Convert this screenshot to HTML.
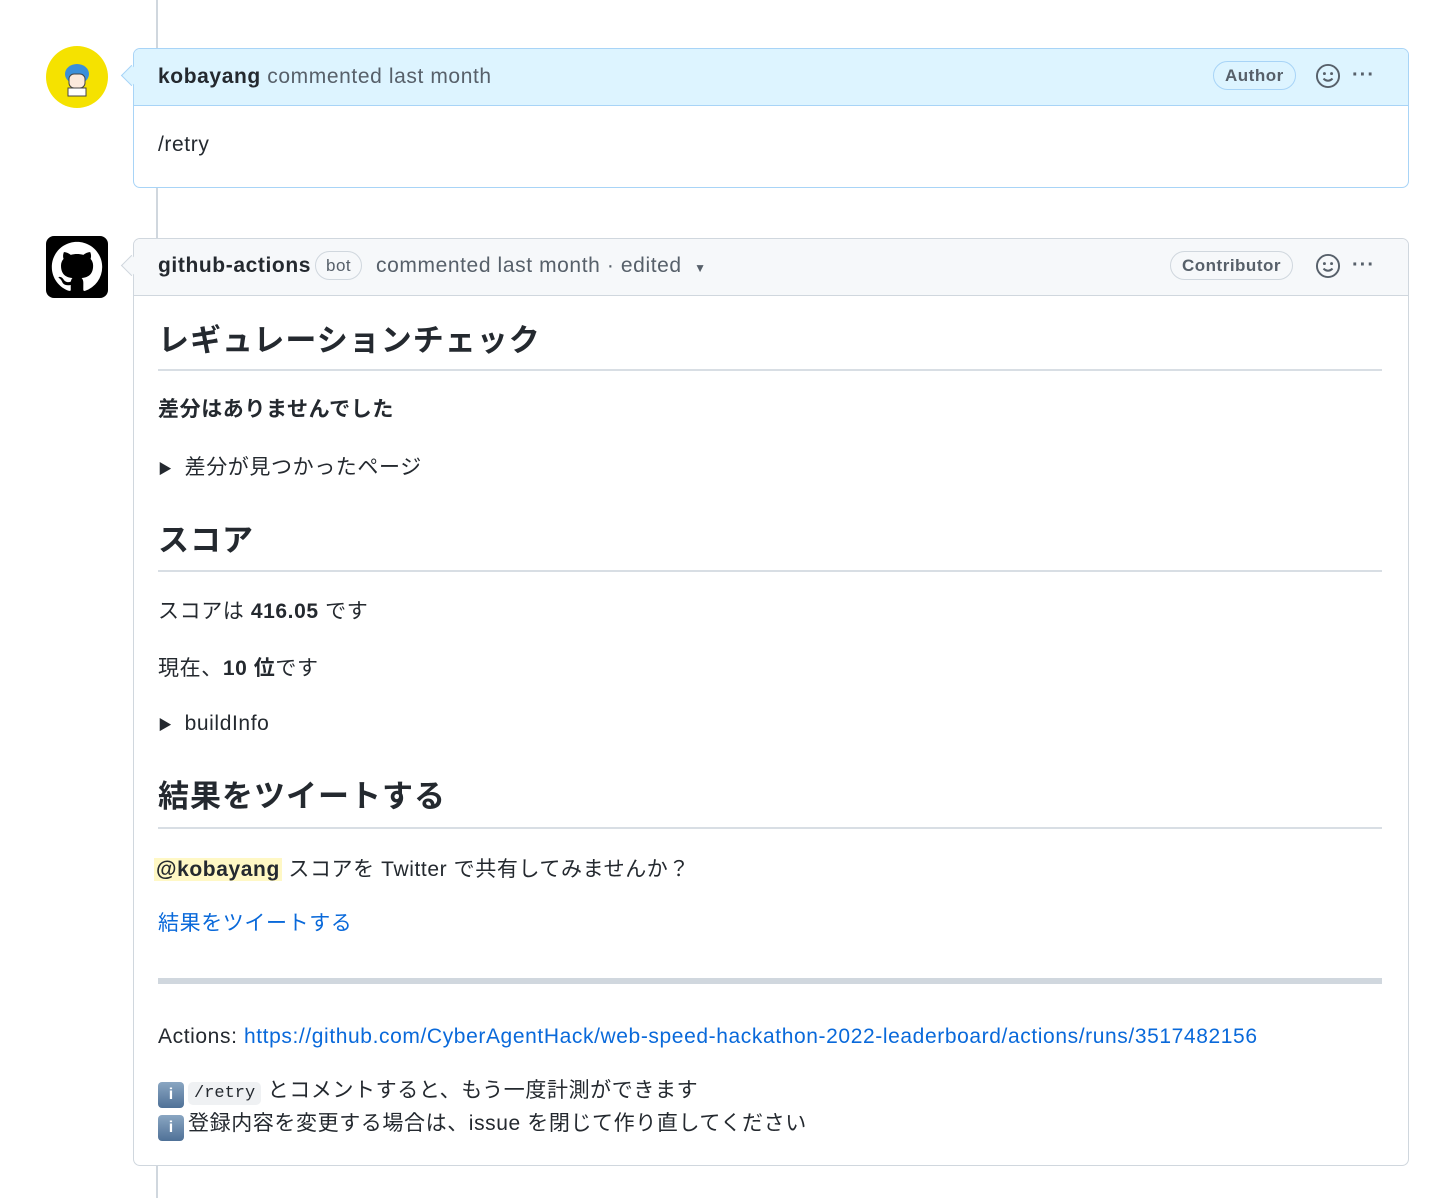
<!DOCTYPE html>
<html><head><meta charset="utf-8"><style>
body{margin:0;width:1440px;height:1198px;background:#fff;position:relative;overflow:hidden;font-family:"Liberation Sans","Noto Sans CJK JP",sans-serif;color:#24292f;}
.a{position:absolute;white-space:nowrap;}
.t{font-size:21px;line-height:28px;letter-spacing:0.6px;}
.h{font-size:31px;line-height:40px;font-weight:bold;letter-spacing:1px;}
.rule{position:absolute;left:158px;width:1224px;height:2px;background:#d8dee4;}
.lbl{position:absolute;border:1.5px solid #d0d7de;border-radius:16px;font-size:17px;line-height:27px;padding:0 11px;color:#57606a;font-weight:bold;letter-spacing:0.5px;}
.mut{color:#57606a}
.link{color:#0969da}
.info{display:inline-block;width:26px;height:26px;border-radius:4px;background:linear-gradient(#8aa6c2,#4f7197);color:#fff;font-size:16px;text-align:center;line-height:26px;vertical-align:-2px;margin-right:4px;font-weight:bold;letter-spacing:0}
</style></head><body>
<div class="a" style="left:156px;top:0;width:2px;height:1198px;background:#d0d7de"></div>

<!-- avatar 1 -->
<div class="a" style="left:46px;top:46px;width:62px;height:62px;border-radius:50%;background:#f5e200;overflow:hidden">
<svg width="62" height="62"><ellipse cx="31" cy="28" rx="12" ry="10" fill="#3b8fd9"/><rect x="23" y="28" width="16" height="14" rx="5" fill="#fbe9dc" stroke="#444" stroke-width="1"/><rect x="22" y="42" width="18" height="8" fill="#fff" stroke="#444" stroke-width="1"/></svg></div>
<!-- card 1 -->
<div class="a" style="left:133px;top:48px;width:1274px;height:138px;border:1.5px solid #a8d4f7;border-radius:7px;overflow:hidden;background:#fff">
<div style="height:56px;background:#ddf4ff;border-bottom:1.5px solid #a8d4f7"></div></div>
<div class="a" style="left:124px;top:68px;width:14px;height:14px;background:#ddf4ff;border-left:1.5px solid #a8d4f7;border-bottom:1.5px solid #a8d4f7;transform:rotate(45deg)"></div>
<div class="a t" style="left:158px;top:63px"><b>kobayang</b> <span class="mut">commented last month</span></div>
<div class="lbl" style="left:1213px;top:61px;border-color:#a8d4f7">Author</div>
<svg class="a" style="left:1315px;top:63px" width="26" height="26" viewBox="0 0 16 16"><circle cx="8" cy="8" r="6.8" fill="none" stroke="#57606a" stroke-width="1.2"/><circle cx="5.8" cy="6.5" r=".9" fill="#57606a"/><circle cx="10.2" cy="6.5" r=".9" fill="#57606a"/><path d="M5.2 9.6q2.8 2.6 5.6 0" fill="none" stroke="#57606a" stroke-width="1.2"/></svg>
<div class="a" style="left:1352px;top:64px;font-size:20px;color:#57606a;letter-spacing:1px;font-weight:bold">···</div>
<div class="a t" style="left:158px;top:131px">/retry</div>

<!-- avatar 2 -->
<div class="a" style="left:46px;top:236px;width:62px;height:62px;border-radius:8px;background:#000">
<svg width="62" height="62" viewBox="0 0 16 16"><path transform="translate(1.5 1.5) scale(.8125)" fill="#fff" d="M8 0C3.58 0 0 3.58 0 8c0 3.54 2.29 6.530 5.47 7.59.4.07.55-.17.55-.38 0-.19-.01-.82-.01-1.49-2.01.37-2.53-.49-2.69-.94-.09-.23-.48-.94-.82-1.13-.28-.15-.68-.52-.01-.53.63-.01 1.08.58 1.23.82.72 1.21 1.87.87 2.33.66.07-.52.28-.87.51-1.07-1.78-.2-3.64-.89-3.64-3.95 0-.87.31-1.59.82-2.15-.08-.2-.36-1.02.08-2.12 0 0 .67-.21 2.2.82.64-.18 1.32-.27 2-.27.68 0 1.36.09 2 .27 1.53-1.04 2.2-.82 2.2-.82.44 1.1.16 1.92.08 2.12.51.56.82 1.27.82 2.15 0 3.07-1.87 3.75-3.65 3.95.29.25.54.73.54 1.48 0 1.07-.01 1.93-.01 2.2 0 .21.15.46.55.38A8.013 8.013 0 0016 8c0-4.42-3.58-8-8-8z"/></svg></div>
<!-- card 2 -->
<div class="a" style="left:133px;top:238px;width:1274px;height:926px;border:1.5px solid #d0d7de;border-radius:7px;overflow:hidden;background:#fff">
<div style="height:56px;background:#f6f8fa;border-bottom:1.5px solid #d0d7de"></div></div>
<div class="a" style="left:124px;top:258px;width:14px;height:14px;background:#f6f8fa;border-left:1.5px solid #d0d7de;border-bottom:1.5px solid #d0d7de;transform:rotate(45deg)"></div>
<div class="a t" style="left:158px;top:252px"><b>github-actions</b></div>
<div class="lbl" style="left:315px;top:251px;font-weight:normal;padding:0 10px">bot</div>
<div class="a t mut" style="left:376px;top:252px">commented last month · edited <span style="font-size:12px;margin-left:6px">▼</span></div>
<div class="lbl" style="left:1170px;top:251px">Contributor</div>
<svg class="a" style="left:1315px;top:253px" width="26" height="26" viewBox="0 0 16 16"><circle cx="8" cy="8" r="6.8" fill="none" stroke="#57606a" stroke-width="1.2"/><circle cx="5.8" cy="6.5" r=".9" fill="#57606a"/><circle cx="10.2" cy="6.5" r=".9" fill="#57606a"/><path d="M5.2 9.6q2.8 2.6 5.6 0" fill="none" stroke="#57606a" stroke-width="1.2"/></svg>
<div class="a" style="left:1352px;top:254px;font-size:20px;color:#57606a;letter-spacing:1px;font-weight:bold">···</div>

<div class="a h" style="left:158px;top:321px">レギュレーションチェック</div>
<div class="rule" style="top:369px"></div>
<div class="a t" style="left:158px;top:396px;font-weight:bold">差分はありませんでした</div>
<div class="a t" style="left:158px;top:454px"><span style="font-size:14px;margin-right:12px">▶</span>差分が見つかったページ</div>
<div class="a h" style="left:158px;top:521px">スコア</div>
<div class="rule" style="top:570px"></div>
<div class="a t" style="left:158px;top:598px">スコアは <b>416.05</b> です</div>
<div class="a t" style="left:158px;top:655px">現在、<b>10 位</b>です</div>
<div class="a t" style="left:158px;top:710px"><span style="font-size:14px;margin-right:12px">▶</span>buildInfo</div>
<div class="a h" style="left:158px;top:777px">結果をツイートする</div>
<div class="rule" style="top:827px"></div>
<div class="a t" style="left:158px;top:856px"><span style="background:#fff8c5;font-weight:bold;padding:0 2px;margin-left:-4px">@kobayang</span> スコアを Twitter で共有してみませんか？</div>
<div class="a t link" style="left:158px;top:910px">結果をツイートする</div>
<div class="a" style="left:158px;top:978px;width:1224px;height:6px;background:#d0d7de"></div>
<div class="a t" style="left:158px;top:1023px">Actions: <span class="link">https://github.com/CyberAgentHack/web-speed-hackathon-2022-leaderboard/actions/runs/3517482156</span></div>
<div class="a t" style="left:158px;top:1077px"><span class="info">i</span><span style="font-family:'Liberation Mono',monospace;font-size:17px;background:#eff1f3;border-radius:5px;padding:2px 6px;letter-spacing:0">/retry</span> とコメントすると、もう一度計測ができます</div>
<div class="a t" style="left:158px;top:1110px"><span class="info">i</span>登録内容を変更する場合は、issue を閉じて作り直してください</div>
</body></html>
